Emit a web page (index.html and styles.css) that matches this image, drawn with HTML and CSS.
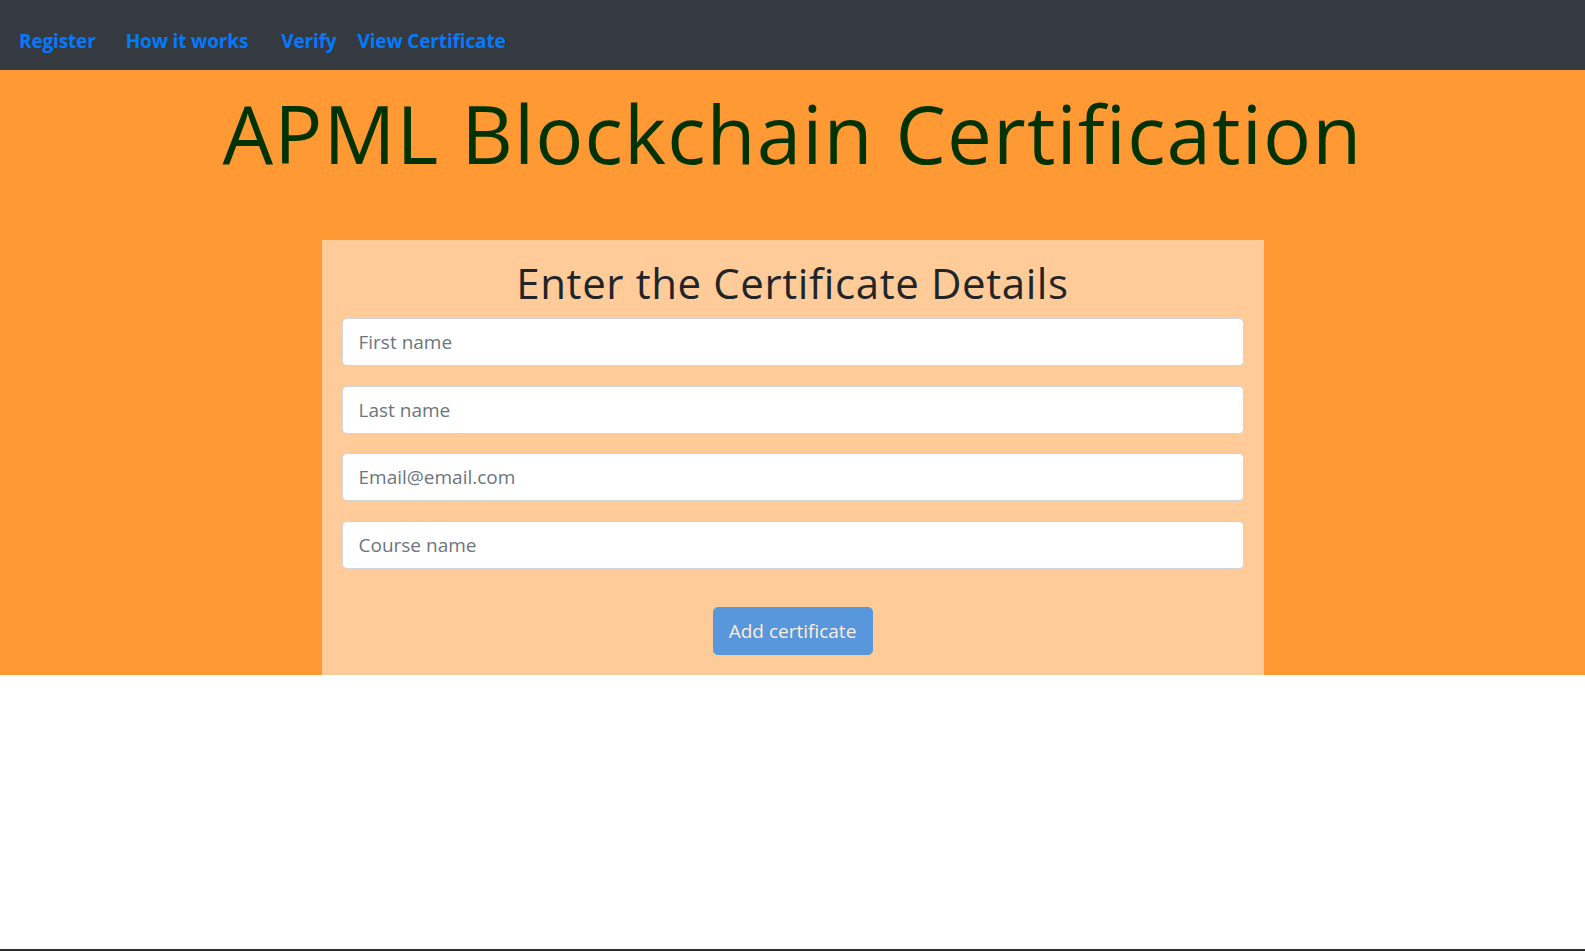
FILE: index.html
```html
<!DOCTYPE html>
<html lang="en">
<head>
<meta charset="utf-8">
<title>APML Blockchain Certification</title>
<link rel="stylesheet" href="styles.css">
</head>
<body>
<nav class="topnav">
  <a class="nav-link nl-register" href="#">Register</a>
  <a class="nav-link nl-how" href="#">How it works</a>
  <a class="nav-link nl-verify" href="#">Verify</a>
  <a class="nav-link" href="#">View Certificate</a>
</nav>
<section class="hero">
  <h1 class="title">APML Blockchain Certification</h1>
  <div class="card">
    <h2 class="card-title">Enter the Certificate Details</h2>
    <form class="cert-form">
      <input class="form-control" type="text" placeholder="First name">
      <input class="form-control" type="text" placeholder="Last name">
      <input class="form-control" type="text" placeholder="Email@email.com">
      <input class="form-control" type="text" placeholder="Course name">
      <div class="btn-row">
        <button class="btn-add" type="button" disabled>Add certificate</button>
      </div>
    </form>
  </div>
</section>
<div class="hscroll"></div>
</body>
</html>
```
FILE: styles.css
```css
* { box-sizing: border-box; }
html, body { margin: 0; padding: 0; }
body {
  background: #ffffff;
  font-family: "Open Sans", "Noto Sans", sans-serif;
  color: #212529;
  height: 951px;
  overflow: hidden;
}
.topnav {
  height: 70px;
  background: #343a40;
  display: flex;
  align-items: flex-start;
  padding: 27px 0 0 19px;
}
.nav-link {
  color: #007bff;
  font-weight: 700;
  font-size: 19px;
  line-height: 28px;
  text-decoration: none;
  margin-right: 30px;
  letter-spacing: -0.15px;
}
.nl-how { margin-right: 33px; }
.nl-verify { margin-right: 21px; }
.hero {
  background: #ff9933;
  text-align: center;
  padding-top: 1px;
}
.title {
  margin: 14px 0 59px;
  font-family: "Open Sans", sans-serif;
  font-weight: 400;
  font-size: 80px;
  line-height: 96px;
  color: #003300;
  letter-spacing: 1.1px;
}
.card {
  width: 942px;
  margin: 0 auto;
  background: #ffcc99;
  padding: 0 20px 20px;
}
.card-title {
  margin: 0 0 6px;
  padding-top: 14px;
  font-family: "Open Sans", sans-serif;
  font-weight: 400;
  font-size: 42px;
  line-height: 58px;
  color: #212529;
  letter-spacing: 0.6px;
}
.cert-form {
  display: flex;
  flex-direction: column;
  gap: 19.5px;
}
.form-control {
  display: block;
  width: 100%;
  height: 48px;
  padding: 8px 16px;
  font-family: "Open Sans", sans-serif;
  font-size: 19px;
  color: #495057;
  background: #fff;
  border: 1px solid #ced4da;
  border-radius: 4.8px;
  outline: none;
}
.form-control::placeholder { color: #6c757d; opacity: 1; }
.btn-row {
  display: flex;
  justify-content: center;
  padding-top: 19px;
}
.btn-add {
  width: 160px;
  height: 48px;
  font-family: "Open Sans", sans-serif;
  font-size: 19px;
  color: #fff;
  background: #007bff;
  border: 1px solid #007bff;
  border-radius: 4.8px;
  opacity: 0.65;
  padding: 0;
}
.hscroll {
  position: fixed;
  left: 0;
  right: 0;
  bottom: 0;
  height: 2px;
  background: #2b2b2b;
}
```
